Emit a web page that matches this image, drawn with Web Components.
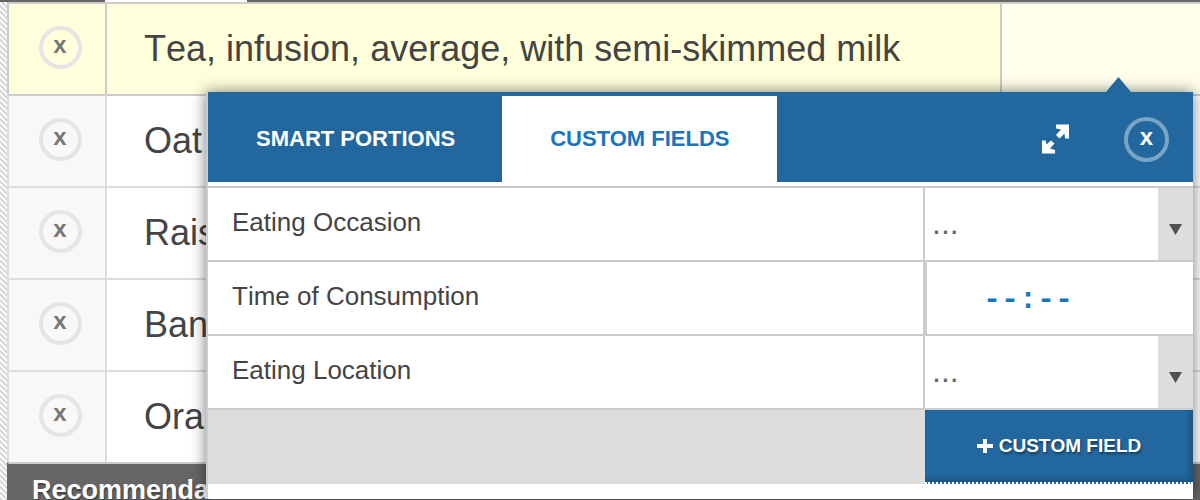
<!DOCTYPE html>
<html lang="en">
<head>
<meta charset="utf-8">
<title>Food diary</title>
<style>
  html, body { margin: 0; height: 100%; }
  body { overflow: hidden; background: #fff; font-family: "Liberation Sans", Arial, sans-serif; color: #444; }
</style>
</head>
<body>
<diary-page>
  <food-table></food-table>
  <entry-popover slot="popover">
    <field-row kind="select">Eating Occasion</field-row>
    <field-row kind="time">Time of Consumption</field-row>
    <field-row kind="select">Eating Location</field-row>
    <add-field slot="footer">CUSTOM FIELD</add-field>
  </entry-popover>
</diary-page>

<script>
const define = (name, html) => customElements.define(name, class extends HTMLElement {
  connectedCallback() {
    if (this.shadowRoot) return;
    const root = this.attachShadow({ mode: 'open' });
    const t = document.createElement('template');
    t.innerHTML = typeof html === 'function' ? html(this) : html;
    root.append(t.content.cloneNode(true));
  }
});

define('round-button', `
<style>
  :host { display: inline-block; vertical-align: middle; }
  button { display: flex; align-items: center; justify-content: center; box-sizing: border-box;
    width: var(--size, 43px); height: var(--size, 43px); padding: 0 0 4px; border-radius: 50%;
    border: 4px solid var(--ring, #e5e5e5); background: none; color: var(--ink, #777);
    font: bold 24px/28px "Liberation Sans", Arial, sans-serif; }
</style>
<button type="button" aria-label="Remove"><slot>x</slot></button>`);

define('food-table', `
<style>
  :host { display: block; }
  .strip { display: flex; height: 2px; background: #666; }
  .strip i { width: 142px; margin-left: 105px; background: #fff; }
  .wrap { display: flex; }
  .hatch { flex: none; width: 7px; background: repeating-linear-gradient(45deg, #d4d4d4 0 1px, #fff 2px 3px, #d4d4d4 4px); }
  table { flex: 1; border-collapse: separate; border-spacing: 0; table-layout: fixed; width: 100%; }
  td { box-sizing: border-box; height: 92px; padding: 0; border-top: 2px solid #ddd; border-left: 2px solid #ddd; }
  td.rm { width: 98px; padding: 0 0 4px 6px; text-align: center; background: #f8f8f8; }
  td.nm { width: 75%; padding-left: 37px; font-size: 36px; line-height: 40px; font-kerning: none; white-space: nowrap; }
  tr.on td { background: #ffffdb; border-color: #ccc; }
  tr.on td:last-child { background: #ffffec; }
  tr.on + tr td { border-top-color: #ccc; }
  tfoot td { height: 48px; padding: 6px 0 0 23px; background: #666; border-top-color: #ccc; border-left-color: #666;
    color: #fff; font-size: 27px; font-weight: bold; line-height: 32px; text-shadow: 1px 2px 2px #0006; }
</style>
<div class="strip"><i></i></div>
<div class="wrap">
  <div class="hatch"></div>
  <table>
    <tbody>
      <tr class="on"><td class="rm"><round-button></round-button></td><td class="nm">Tea, infusion, average, with semi-skimmed milk</td><td></td></tr>
      <tr><td class="rm"><round-button></round-button></td><td class="nm">Oat</td><td></td></tr>
      <tr><td class="rm"><round-button></round-button></td><td class="nm">Rais</td><td></td></tr>
      <tr><td class="rm"><round-button></round-button></td><td class="nm">Ban</td><td></td></tr>
      <tr><td class="rm"><round-button></round-button></td><td class="nm">Oran</td><td></td></tr>
    </tbody>
    <tfoot><tr><td colspan="3">Recommenda</td></tr></tfoot>
  </table>
</div>`);

define('entry-popover', `
<style>
  :host { display: block; position: relative; background: #fff; border-left: 2px solid #ccc;
    padding-bottom: 15px; box-shadow: 0 0 14px #0008; }
  .tip { position: absolute; top: -15px; right: 62px; width: 25px; height: 15px; background: #22679d;
    clip-path: polygon(50% 0, 100% 100%, 0 100%); }
  header { display: flex; align-items: stretch; height: 86px; padding-top: 4px; background: #22679d; }
  header button { border: 0; background: none; padding: 0 47px 0 48px; color: #fff;
    font: bold 22px/26px "Liberation Sans", Arial, sans-serif; white-space: nowrap; }
  header button[aria-selected=true] { background: #fff; color: #1b75bb; }
  [role=tablist] { display: flex; }
  .tools { display: flex; align-items: center; gap: 55px; margin-left: auto; padding-right: 24px; }
  header .expand { padding: 0; display: flex; }
  round-button { --size: 45px; --ring: #7aa4c4; --ink: #fff; }
  .fields { margin-top: 4px; }
  footer { display: flex; justify-content: flex-end; background: #ddd; border-top: 2px solid #ccc; }
</style>
<div class="tip"></div>
<header>
  <div role="tablist">
    <button role="tab" type="button" aria-selected="false">SMART PORTIONS</button>
    <button role="tab" type="button" aria-selected="true">CUSTOM FIELDS</button>
  </div>
  <div class="tools">
    <button class="expand" type="button" aria-label="Expand">
      <svg width="28" height="30" viewBox="0 0 28 30" fill="#fff"><path d="M15 0.500H28V14.500H24L23.500 9.500 18.500 14.500 15 11 20 5.500 15 4.500ZM1 16.500H4.500L5.500 20.500 10 16.500 13.500 19.500 9 24.500 14 26V29.500H1Z"/></svg>
    </button>
    <round-button></round-button>
  </div>
</header>
<div class="fields"><slot></slot></div>
<footer><slot name="footer"></slot></footer>`);

define('field-row', el => `
<style>
  :host { display: grid; grid-template-columns: 1fr 270px; height: 72px; border-top: 2px solid #ccc; }
  label { display: flex; align-items: center; padding: 0 0 4px 24px; font-size: 26px; line-height: 30px; font-kerning: none; }
  .cell { position: relative; display: grid; border-left: 2px solid #ccc; }
  select, input { box-sizing: border-box; width: 100%; height: 100%; margin: 0; border: 0; border-radius: 0; background: #fff; outline: 0; }
  select { appearance: none; padding: 0 36px 2px 7px; color: #666; font: 32px/36px "Liberation Sans", Arial, sans-serif; }
  input { padding: 4px 0 0 56px; border-left: 2px solid #ccc; color: #1b75bb; font: bold 30px/34px "Liberation Mono", monospace; }
  .arrow { position: absolute; top: 0; right: 0; bottom: 0; width: 35px; display: flex; align-items: center; justify-content: center;
    padding-top: 10px; box-sizing: border-box; background: #ddd; pointer-events: none; }
</style>
<label for="control"><slot></slot></label>
<div class="cell">${el.getAttribute('kind') === 'time'
  ? '<input id="control" type="text" value="--:--">'
  : '<select id="control"><option>...</option></select><span class="arrow"><svg width="13" height="11" viewBox="0 0 13 11"><path d="M0 0H13L6.500 11Z" fill="#505050"/></svg></span>'}</div>`);

define('add-field', `
<style>
  :host { display: block; width: 268px; }
  button { display: flex; align-items: center; justify-content: center; gap: 6px; box-sizing: border-box; width: 100%; height: 74px;
    padding: 0; border: 0; border-bottom: 2px dotted #fff; background: #22679d; color: #fff; box-shadow: inset -3px -3px 5px #0003;
    font: bold 19px/24px "Liberation Sans", Arial, sans-serif; font-kerning: none; text-shadow: 1px 2px 2px #0006; }
</style>
<button type="button"><svg width="16" height="16" viewBox="0 0 16 16" aria-hidden="true"><path d="M6 1h4v5h6v4h-6v5H6v-5H0V6h6z" fill="#fff"/></svg><span><slot></slot></span></button>`);

define('diary-page', `
<style>
  :host { display: block; position: relative; min-height: 100vh; overflow: hidden; }
  .over { position: absolute; top: 92px; left: 206px; right: 7px; }
</style>
<slot></slot>
<div class="over"><slot name="popover"></slot></div>`);
</script>
</body>
</html>
